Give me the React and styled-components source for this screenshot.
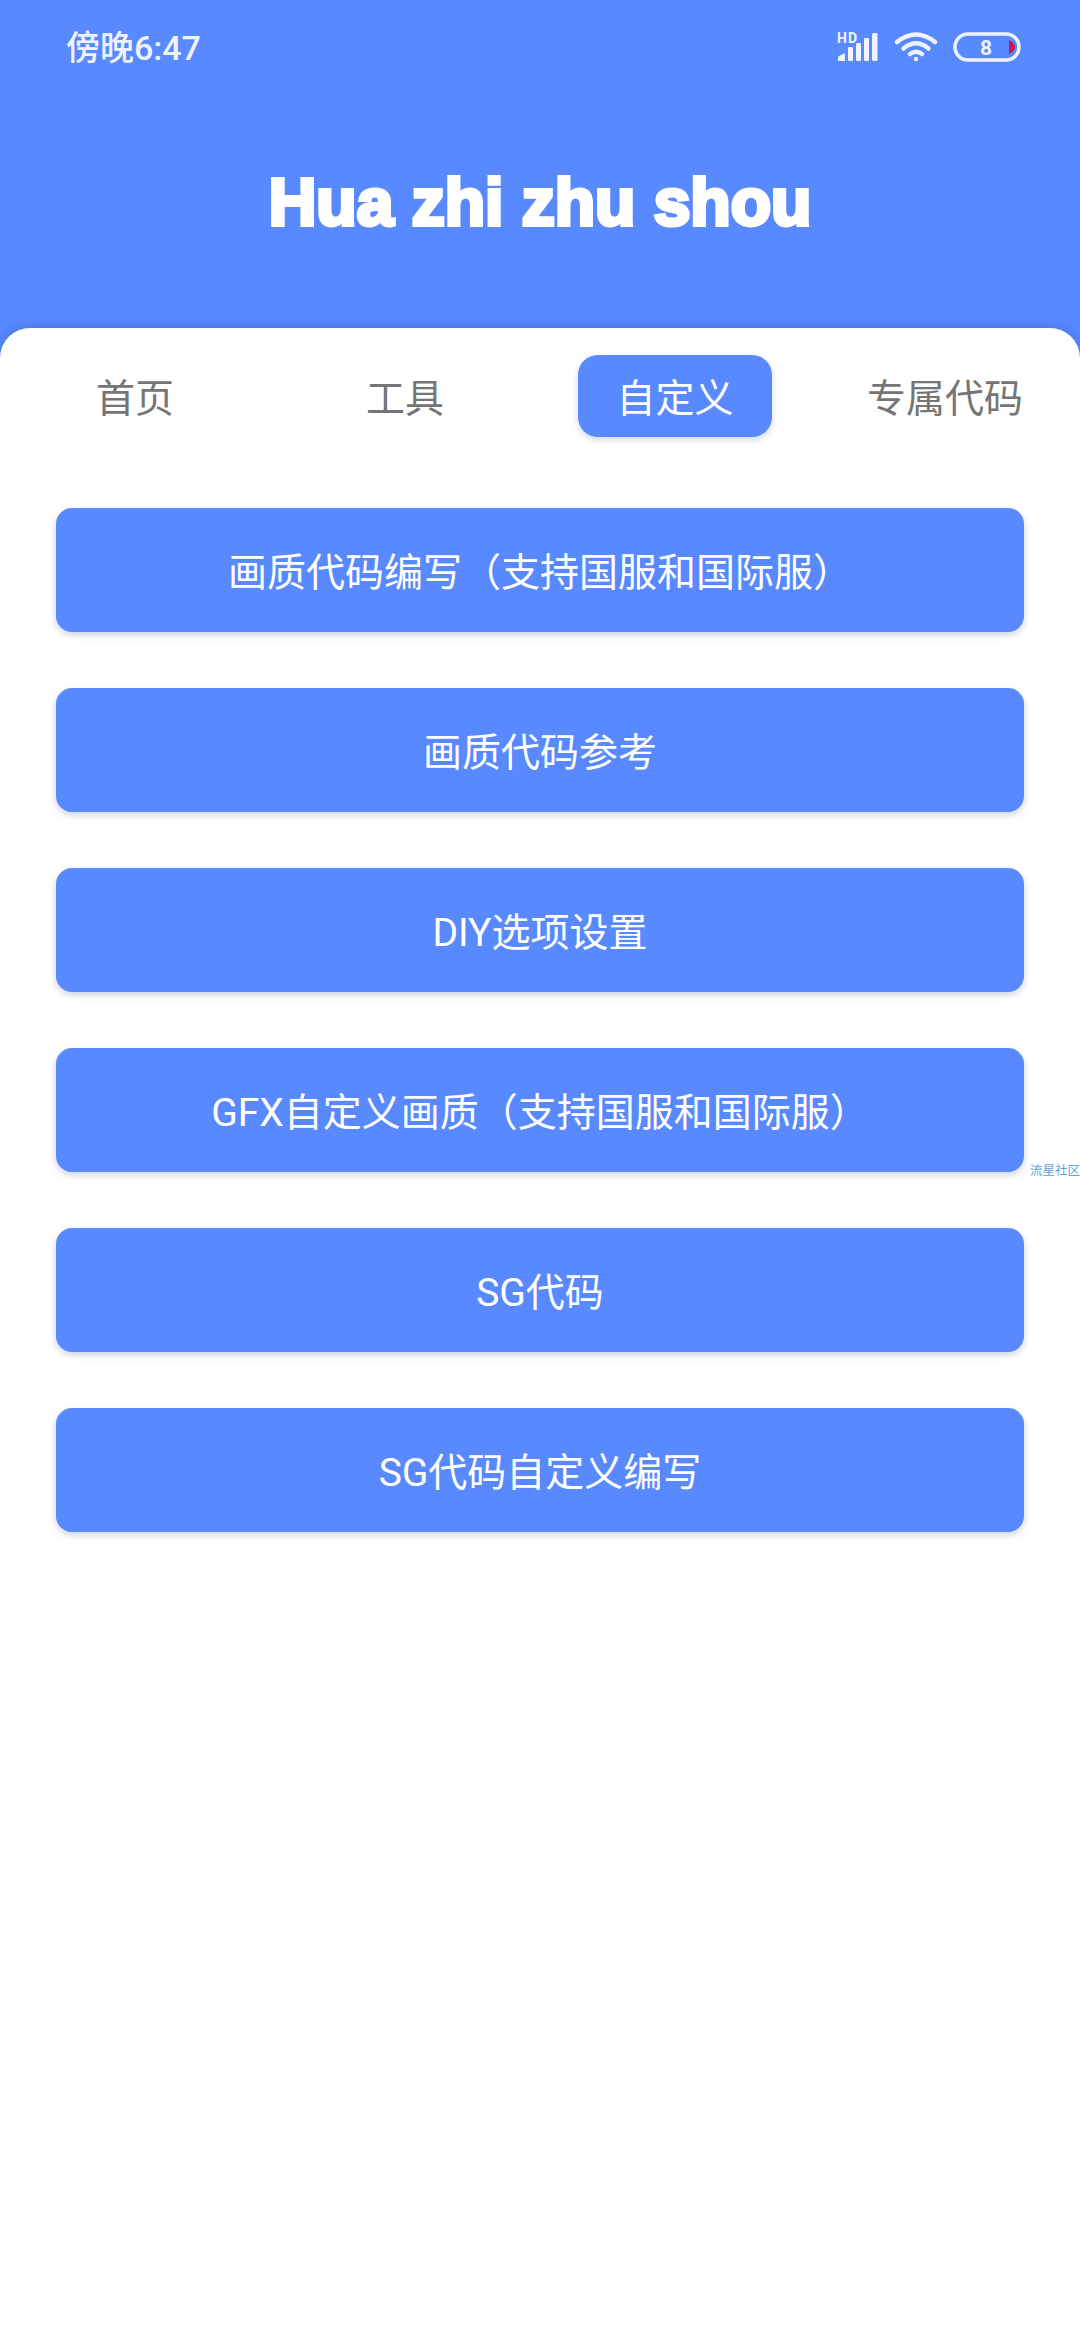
import React from 'react';
import styled, { createGlobalStyle } from 'styled-components';

const BLUE = '#5889ff';

const GlobalStyle = createGlobalStyle`
  html, body {
    margin: 0;
    padding: 0;
    background: #fff;
  }
  * {
    box-sizing: border-box;
  }
`;

const Page = styled.div`
  position: relative;
  width: 1080px;
  height: 2340px;
  display: flex;
  flex-direction: column;
  overflow: hidden;
  background: ${BLUE};
  font-family: 'Roboto', 'Noto Sans CJK SC', sans-serif;
`;

const StatusBar = styled.div`
  height: 96px;
  padding: 28px 59px 0 66px;
  display: flex;
  justify-content: space-between;
  align-items: flex-start;
  color: #eef3ff;
`;

const Time = styled.div`
  font-size: 34px;
  line-height: 40px;
  font-weight: 500;
`;

const StatusIcons = styled.div`
  display: flex;
  align-items: center;
  gap: 15px;
  padding-top: 4px;
`;

const Signal = styled.div`
  position: relative;
  width: 42px;
  height: 30px;
`;

const HdBadge = styled.span`
  position: absolute;
  left: 0;
  top: -2px;
  font-size: 14px;
  line-height: 16px;
  font-weight: 700;
  letter-spacing: 1px;
  color: #eef3ff;
`;

const Title = styled.h1`
  margin: 0;
  height: 232px;
  padding-top: 66px;
  text-align: center;
  color: #fff;
  font-family: 'Liberation Sans', sans-serif;
  font-size: 66px;
  line-height: 80px;
  font-weight: 700;
  -webkit-text-stroke: 4px #fff;
`;

const Card = styled.main`
  flex: 1;
  background: #fff;
  border-radius: 30px 30px 0 0;
  box-shadow: 0 -3px 8px rgba(40, 60, 120, 0.2);
  padding-top: 27px;
`;

const Tabs = styled.nav`
  display: grid;
  grid-template-columns: repeat(4, 270px);
  justify-items: center;
  align-items: center;
  height: 82px;
`;

const Tab = styled.div`
  height: 82px;
  padding: 0 38px 3px;
  display: flex;
  align-items: center;
  white-space: nowrap;
  border-radius: 20px;
  font-size: 39px;
  font-weight: 400;
  color: ${(p) => (p.$active ? '#fff' : '#757575')};
  background: ${(p) => (p.$active ? BLUE : 'transparent')};
  box-shadow: ${(p) => (p.$active ? '0 3px 7px rgba(60, 80, 140, 0.22)' : 'none')};
`;

const Menu = styled.div`
  margin-top: 71px;
  padding: 0 56px;
  display: flex;
  flex-direction: column;
  gap: 56px;
`;

const MenuButton = styled.div`
  height: 124px;
  padding-bottom: 3px;
  display: flex;
  align-items: center;
  justify-content: center;
  background: ${BLUE};
  border-radius: 16px;
  color: #fff;
  font-size: 39px;
  font-weight: 400;
  box-shadow: 0 3px 7px rgba(60, 80, 140, 0.25);
`;

const Watermark = styled.div`
  position: absolute;
  left: 1030px;
  top: 1163px;
  width: 50px;
  white-space: nowrap;
  font-size: 12.5px;
  line-height: 16px;
  color: #5ba3e0;
`;

const TABS = ['首页', '工具', '自定义', '专属代码'];

const ITEMS = [
  '画质代码编写（支持国服和国际服）',
  '画质代码参考',
  'DIY选项设置',
  'GFX自定义画质（支持国服和国际服）',
  'SG代码',
  'SG代码自定义编写',
];

const SignalIcon = () => (
  <Signal>
    <HdBadge>HD</HdBadge>
    <svg width="42" height="30" viewBox="0 0 42 30" fill="#eef3ff">
      <path d="M1 29 L1 25.500 Q1 24.500 2 24 L8 21 L8 29 Z" />
      <rect x="11" y="15" width="5" height="14" rx="1" />
      <rect x="19" y="11" width="5" height="18" rx="1" />
      <rect x="27" y="6" width="5" height="23" rx="1" />
      <rect x="35" y="1" width="5.500" height="28" rx="1.500" />
    </svg>
  </Signal>
);

const WifiIcon = () => (
  <svg width="44" height="30" viewBox="0 0 44 30" fill="none" stroke="#eef3ff" strokeWidth="4.500" strokeLinecap="round">
    <path d="M3 10 Q22 -5 41 10" />
    <path d="M9.500 16.500 Q22 6 34.500 16.500" />
    <path d="M16 22 Q22 17.500 28 22" />
    <circle cx="22" cy="27" r="2.200" fill="#eef3ff" stroke="none" />
  </svg>
);

const BatteryIcon = () => (
  <svg width="68" height="30" viewBox="0 0 68 30">
    <rect x="2" y="2" width="64" height="26" rx="13" fill="none" stroke="#eef3ff" strokeWidth="3.500" />
    <text x="33" y="23" textAnchor="middle" fontSize="21" fontWeight="700" fontFamily="Roboto, sans-serif" fill="#eef3ff">8</text>
    <path d="M56 8 Q62 11 62 15 Q62 19 56 22 Z" fill="#c8174a" />
  </svg>
);

const App = () => {
  return (
    <Page>
      <GlobalStyle />
      <StatusBar>
        <Time>傍晚6:47</Time>
        <StatusIcons>
          <SignalIcon />
          <WifiIcon />
          <BatteryIcon />
        </StatusIcons>
      </StatusBar>
      <Title>Hua zhi zhu shou</Title>
      <Card>
        <Tabs>
          {TABS.map((tab) => (
            <Tab key={tab} $active={tab === '自定义'}>
              {tab}
            </Tab>
          ))}
        </Tabs>
        <Menu>
          {ITEMS.map((item) => (
            <MenuButton key={item}>{item}</MenuButton>
          ))}
        </Menu>
      </Card>
      <Watermark>流星社区</Watermark>
    </Page>
  );
};

export default App;
